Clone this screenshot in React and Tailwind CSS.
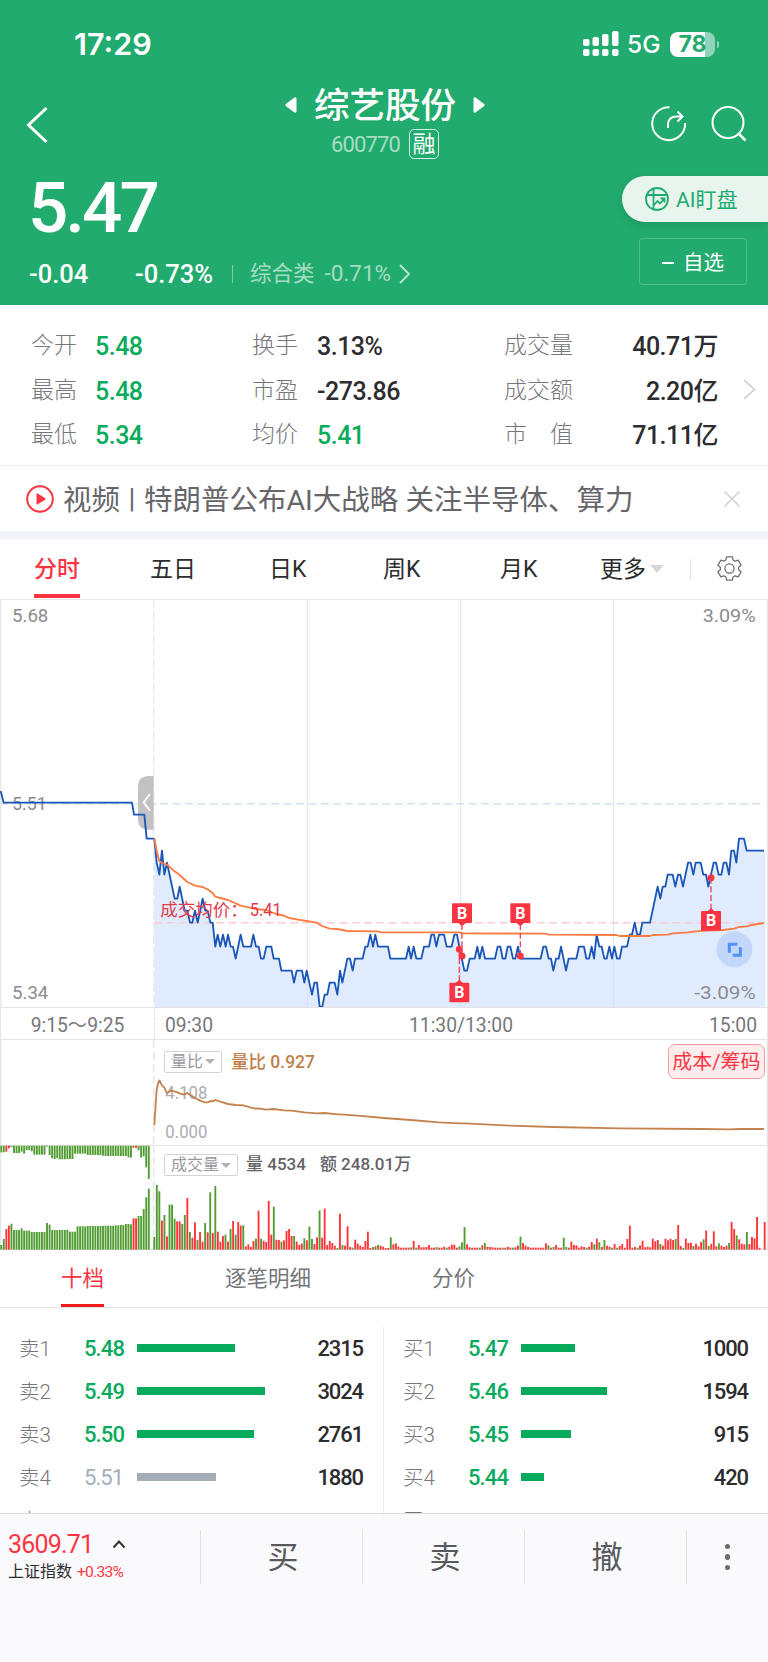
import React from 'react';
import clsx from 'clsx';

const STATS = [
  [['今开', '5.48', true], ['换手', '3.13%'], ['成交量', '40.71万']],
  [['最高', '5.48', true], ['市盈', '-273.86'], ['成交额', '2.20亿']],
  [['最低', '5.34', true], ['均价', '5.41', true], ['市　值', '71.11亿']],
];

const SELL_ORDERS = [
  { label: '卖1', price: '5.48', qty: 2315, bar: 98 },
  { label: '卖2', price: '5.49', qty: 3024, bar: 128 },
  { label: '卖3', price: '5.50', qty: 2761, bar: 117 },
  { label: '卖4', price: '5.51', qty: 1880, bar: 79, flat: true },
  { label: '卖5' },
];

const BUY_ORDERS = [
  { label: '买1', price: '5.47', qty: 1000, bar: 54 },
  { label: '买2', price: '5.46', qty: 1594, bar: 86 },
  { label: '买3', price: '5.45', qty: 915, bar: 50 },
  { label: '买4', price: '5.44', qty: 420, bar: 23 },
  { label: '买5' },
];

// [x, cents above 5.34]
const PRICE = [
  [463, 14], [470, 12], [478, 11], [486, 13], [493, 11], [501, 12], [524, 9], [532, 9], [539, 10], [554, 8],
  [562, 8], [570, 7], [577, 7], [585, 8], [593, 7], [608, 9], [616, 8], [623, 8], [631, 7], [638, 7],
  [646, 5], [653, 6], [661, 5], [669, 6], [677, 5], [684, 6], [692, 5], [699, 5], [707, 4], [722, 6],
  [730, 5], [753, 5], [760, 6], [768, 5], [776, 5], [783, 4], [791, 4], [799, 5], [814, 5], [821, 4],
  [837, 4], [844, 3], [875, 3], [882, 2], [890, 3], [906, 3], [913, 2], [920, 3], [936, 1], [943, 2],
  [951, 2], [959, 0], [967, 0], [974, 1], [982, 1], [989, 2], [1004, 2], [1012, 1], [1020, 3], [1027, 2],
  [1042, 4], [1050, 4], [1058, 3], [1065, 4], [1088, 4], [1096, 5], [1103, 5], [1111, 6], [1119, 5], [1126, 6],
  [1134, 5], [1164, 5], [1171, 4], [1218, 4], [1226, 5], [1233, 4], [1241, 5], [1249, 4], [1264, 4], [1272, 5],
  [1287, 5], [1294, 6], [1302, 6], [1309, 5], [1317, 6], [1332, 6], [1340, 5], [1355, 5], [1363, 6], [1371, 6],
  [1378, 5], [1393, 3], [1401, 3], [1409, 4], [1424, 4], [1432, 5], [1439, 4], [1447, 5], [1455, 4], [1485, 4],
  [1493, 5], [1501, 5], [1508, 4], [1516, 4], [1523, 5], [1531, 5], [1539, 4], [1546, 4], [1554, 5], [1561, 4],
  [1622, 4], [1630, 5], [1638, 5], [1646, 4], [1653, 4], [1660, 3], [1668, 4], [1676, 4], [1683, 5], [1698, 3],
  [1706, 4], [1729, 4], [1737, 5], [1752, 5], [1759, 4], [1767, 4], [1775, 5], [1782, 4], [1790, 6], [1798, 5],
  [1805, 5], [1813, 4], [1820, 4], [1828, 5], [1836, 4], [1843, 5], [1851, 4], [1859, 4], [1866, 5], [1881, 5],
  [1889, 6], [1896, 6], [1904, 7], [1912, 6], [1920, 6], [1927, 7], [1950, 7], [1973, 10], [1981, 9], [1988, 10],
  [1996, 10], [2003, 11], [2018, 11], [2026, 10], [2034, 11], [2041, 11], [2049, 10], [2064, 12], [2072, 12],
  [2080, 11], [2087, 12], [2102, 12], [2110, 11], [2118, 11], [2125, 10], [2133, 11], [2141, 12], [2148, 12],
  [2156, 11], [2164, 11], [2171, 12], [2179, 12], [2187, 11], [2194, 13], [2202, 13], [2209, 12], [2217, 14],
  [2232, 14], [2240, 13], [2292, 13],
];

const AVERAGE =
  '463,746 470,782 478,814 486,819 501,824 524,844 539,855 562,876 585,887 608,891 623,898 638,909 646,920 661,924 684,930 722,947 745,952 768,957 798,960 829,972 852,977 867,984 890,988 920,993 950,998 966,1008 989,1016 1012,1017 1042,1023 1134,1024 1145,1027 1379,1027 1386,1030 1638,1031 1645,1034 1850,1035 1858,1038 1950,1038 1958,1035 2003,1034 2018,1030 2064,1027 2087,1024 2118,1022 2170,1020 2202,1016 2217,1011 2240,1009 2255,1005 2292,999';

const RATIO =
  '463,285 467,225 470,180 474,160 478,151 486,166 493,173 501,190 508,184 516,182 532,187 547,193 554,193 562,189 570,194 585,204 600,212 615,217 623,217 631,213 638,214 646,210 661,215 684,222 707,225 730,226 753,233 768,236 776,235 798,239 821,237 852,241 875,242 913,247 951,250 974,249 1012,253 1020,253 1073,257 1152,264 1233,270 1316,277 1380,280 1395,280 1530,287 1660,291 1860,295 2100,297 2190,298 2220,297 2292,297';

// minute volume, split into runs by starting minute; trailing g = falling minute
const VOLUME = [
  [0, '38g 194g 175g 87 104g 40 135g 135g 93g 85 85 77g 104g 155 53g 36 82 29g 53 24 80g 52 172g 50 191g 54 24 41 45g 24 62g 86 45g 83 72 73g'],
  [36, '10 16 8 26 33g 117 33g 27 23 146 45 129g 30 29 24g 28 56 62 41 41g 24 14 18 34g 28 69g 32g 17 37 118g 36 123'],
  [68, '14 26 20 12 5g 108 14g 12 70 8 6g 30 18 12 8 26 54 5 8g 10 14g 12 9 5 5'],
  [93, '37g 16 19 9 6 6 6 6 7g 26 6g 14 7 7 8 14 6 6 8g 6 6 9 6g 9 15 15 6 10g 22g 68g 16'],
  [124, '7 6 6 6 6g 13 20g 9 8 7 6 6 6 6g 6 9 6 6g 7 12 39g 20 12 8 6 6 6 6 6 6 19 13g 6 8g 14 6 6 36g 8g 6'],
  [164, '24 14 13 6 10 8 6g 9 23 16g 33 22g 8 29g 12 9 6g 17 6g 11 17 6 32 72 6 8 6g 13 27 7 9 7'],
  [196, '33 25 29 17g 12 33 28 33 29 32g 74 11 5g 33 20 21 11g 18 10 23 31g 57 11g 17 55 10 19g 12 8 12 20g'],
  [227, '83 62 43g 31 18 16 53g 17 38 34 98 6 0 83'],
];

const AUCTION_TOP =
  '20g 20g 18 8 4g 22g 22g 22g 18g 24g 13g 13g 17g 27g 27g 27g 27g 27g 3g 28g 38g 40g 38g 41g 41g 41g 40g 40g 40g 24g 24g 24g 24g 24g 28g 28g 28g 28g 28g 28g 30g 31g 31g 31g 31g 31g 31g 31g 31g 31g 35g 36g 6 7 14g 36g 32g 65g 100g';
const AUCTION_BOTTOM =
  '14g 32g 62 72 78g 59g 59g 59g 64g 57g 57g 57g 53g 53g 53g 53g 53g 53g 80g 75g 59g 59g 59g 59g 59g 59g 59g 54g 54g 54g 70g 70g 70g 70g 71g 71g 71g 71g 71g 71g 71g 72g 72g 72g 72g 73g 73g 74g 74g 77g 77g 76g 94 94 101g 101g 122g 157g 183g';

const STEP = 7.63;

const TRADES = [
  { x: 1378, dotY: 1078, boxY: 1178, below: true },
  { x: 1386, dotY: 1098, boxY: 940 },
  { x: 1561, dotY: 1098, boxY: 940 },
  { x: 2133, dotY: 863, boxY: 963, below: true },
];

const parseBars = (text) =>
  text.split(' ').map((v) => ({ h: parseInt(v, 10), down: v.endsWith('g') }));

const Bars = ({ values, x, y, hanging }) =>
  parseBars(values).map((bar, i) => (
    <rect
      key={i}
      x={x + i * STEP - 3}
      y={hanging ? y : y - bar.h}
      width="5.6"
      height={bar.h}
      fill={bar.down ? '#519c33' : '#ff3338'}
    />
  ));

const StatusBar = () => (
  <div className="flex items-center h-[88px] pl-[74px] pr-[49px] text-white font-['Inter']">
    <span className="text-[30.500px] leading-[40px] font-semibold">17:29</span>
    <div className="ml-auto flex items-center">
      <svg width="36" height="26" viewBox="0 0 36 26" fill="currentColor">
        <rect x="0" y="8" width="6.500" height="7" rx="2" />
        <rect x="9.500" y="6" width="6.500" height="9" rx="2" />
        <rect x="19" y="3" width="6.500" height="12" rx="2" />
        <rect x="29" y="0" width="6.500" height="15" rx="2" />
        <rect x="0" y="18" width="6.500" height="7" rx="2" />
        <rect x="9.500" y="18" width="6.500" height="7" rx="2" />
        <rect x="19" y="18" width="6.500" height="7" rx="2" />
        <rect x="29" y="18" width="6.500" height="7" rx="2" />
      </svg>
      <span className="ml-[8px] w-[43px] text-[24.500px] leading-[32px] font-medium">5G</span>
      <div className="flex items-center gap-[2px]">
        <div className="flex items-center justify-center w-[45px] h-[25px] rounded-[8px] bg-[linear-gradient(90deg,#fff_78%,#90d5b7_78%)] text-[#22ab6e] text-[23px] leading-[32px] font-bold">
          78
        </div>
        <div className="w-[2px] h-[7px] rounded-r bg-[#90d5b7]" />
      </div>
    </div>
  </div>
);

const TitleBar = () => (
  <div className="grid grid-cols-[1fr_auto_1fr] h-[82px] pl-[27px] pr-[25px] text-white">
    <svg className="mt-[18px] -ml-px" width="22" height="38" viewBox="0 0 22 38" fill="none" stroke="currentColor" strokeWidth="3">
      <path d="M20.500 2 2.500 19l18 17" />
    </svg>
    <div className="flex flex-col items-center">
      <div className="flex items-center gap-[17px] h-[34px]">
        <svg width="12" height="16" viewBox="0 0 12 16" fill="currentColor">
          <path d="M9.500.6Q11.500-.4 11.500 2v12q0 2.400-2 1.400L.8 9q-1-1 0-2Z" />
        </svg>
        <span className="pt-[2px] text-[35.500px] leading-[50px] font-medium">综艺股份</span>
        <svg width="12" height="16" viewBox="0 0 12 16" fill="currentColor">
          <path d="M2.500.6Q.5-.4.5 2v12q0 2.400 2 1.400L11.200 9q1-1 0-2Z" />
        </svg>
      </div>
      <div className="flex items-center gap-[9px] mt-[7px]">
        <span className="pt-[2px] text-[22px] leading-[26px] text-white/60 tracking-[-0.9px]">600770</span>
        <span className="flex items-center justify-center size-[30px] border-[1.5px] border-white/80 rounded-[5px] text-[23px] leading-none">
          融
        </span>
      </div>
    </div>
    <div className="flex justify-end gap-[24px] pt-[18px] -mr-[4px]">
      <svg width="36" height="36" viewBox="0 0 36 36" fill="none" stroke="currentColor" strokeWidth="2">
        <path d="M18.500 1.200A16.500 16.500 0 1 0 34.200 17" />
        <path d="M17 22v-3q0-8.500 8.500-8.500H30" />
        <path d="m26.500 5.500 5 5-5 5" />
      </svg>
      <svg width="36" height="36" viewBox="0 0 36 36" fill="none" stroke="currentColor" strokeWidth="2">
        <circle cx="17" cy="16.500" r="15.500" />
        <path d="m27.500 27.500 7 7" strokeWidth="2.500" />
      </svg>
    </div>
  </div>
);

const QuoteHeader = () => (
  <header className="h-[305px] bg-[#22ab6e]">
    <StatusBar />
    <TitleBar />
    <div className="flex justify-between text-white">
      <div className="pl-[29px]">
        <div className="h-[73px] -ml-[1px] pt-[2px] text-[71px] leading-[72px] font-medium tracking-[-3px]">5.47</div>
        <div className="flex items-center h-[30px] mt-[16px] text-[25.500px] font-medium">
          <span className="w-[106px]">-0.04</span>
          <span className="w-[97px]">-0.73%</span>
          <span className="w-px h-[18px] bg-white/40" />
          <span className="ml-[17px] text-[21.500px] text-white/60 font-normal">综合类</span>
          <span className="ml-[10px] text-[22.500px] text-white/60 font-normal">-0.71%</span>
          <svg className="ml-[8px]" width="12" height="20" viewBox="0 0 12 20" fill="none" stroke="#fff" strokeOpacity=".7" strokeWidth="1.800">
            <path d="m1 1 9 9-9 9" />
          </svg>
        </div>
      </div>
      <div className="flex flex-col items-end pt-[6px]">
        <div className="flex items-center w-[146px] h-[46px] pl-[23px] rounded-l-full bg-[#e8f4ee] text-[#22ab6e] shadow-[0_3px_8px_rgba(0,0,0,0.12)]">
          <svg width="24" height="24" viewBox="0 0 24 24" fill="none" stroke="currentColor" strokeWidth="1.800">
            <circle cx="12" cy="12" r="11" />
            <path d="M8.500 1.800v20.400M1.500 8h21M9 18l3.500-4 2.500 2.500 4.500-5M15.500 11.500h4v4" />
          </svg>
          <span className="ml-[7px] pt-[2px] text-[21px] leading-[28px]">AI盯盘</span>
        </div>
        <div className="flex items-center justify-center w-[108px] h-[47px] mt-[16px] mr-[21px] pt-[3px] border border-white/20 rounded-[3px] text-[20.500px]">
          <span className="w-[12px] h-[2px] mr-[9px] bg-white" />
          自选
        </div>
      </div>
    </div>
  </header>
);

const Stats = () => (
  <section className="relative h-[160px] pt-[18px] pl-[31px] pr-[50px]">
    {STATS.map((row, i) => (
      <div key={i} className="grid grid-cols-[64px_157px_65px_187px_76px_1fr] items-center h-[44.700px]">
        {row.map(([label, value, down], j) => (
          <React.Fragment key={label}>
            <span className="pt-px text-[23px] leading-[32px] whitespace-nowrap text-[#77777b] font-light">{label}</span>
            <span
              className={clsx(
                'text-[25px] leading-[32px] tracking-[-0.5px] font-medium pt-[3px]',
                down ? 'text-[#08ab5c]' : 'text-[#2d2d2f]',
                j === 2 && 'text-right'
              )}
            >
              {value}
            </span>
          </React.Fragment>
        ))}
      </div>
    ))}
    <svg className="absolute right-[12px] top-[74px]" width="13" height="21" viewBox="0 0 13 21" fill="none" stroke="#c9c9cf" strokeWidth="1.500">
      <path d="m1 1 10.500 9.500L1 20" />
    </svg>
  </section>
);

const NewsBar = () => (
  <section className="flex items-center h-[66px] pl-[26px] pr-[28px] border-t border-[#eeeff6]">
    <svg width="28" height="28" viewBox="0 0 28 28">
      <circle cx="14" cy="14" r="12.800" fill="none" stroke="#fa3543" strokeWidth="2" />
      <path d="M10.500 9.200q0-1.300 1.200-.6l7.500 4.600q.9.800 0 1.500l-7.500 4.600q-1.200.5-1.200-.6Z" fill="#fa3543" />
    </svg>
    <span className="ml-[9px] pt-[4px] text-[28.500px] leading-[40px] whitespace-nowrap text-[#66666a]">
      视频<span className="inline-block w-[24px] text-center text-[28px] leading-none align-[2px]">|</span>特朗普公布AI大战略 关注半导体、算力
    </span>
    <svg className="ml-auto" width="16" height="16" viewBox="0 0 16 16" stroke="#c9c9cf" strokeWidth="1.300">
      <path d="m.5.5 15 15M15.500.5l-15 15" />
    </svg>
  </section>
);

const PeriodTabs = () => (
  <nav className="flex h-[60px] pl-[34px] pr-[26px] border-t-[8px] border-[#f2f3f9] box-content text-[23px] leading-[61px] text-[#2d2d2f]">
    <div className="w-[116px]">
      <span className="inline-block h-[59px] border-b-4 border-[#fa3543] text-[#fa3543] font-medium">分时</span>
    </div>
    <div className="w-[119px]">五日</div>
    <div className="w-[114px]">日K</div>
    <div className="w-[117px]">周K</div>
    <div className="w-[100px]">月K</div>
    <div className="flex items-center w-[90px]">
      更多
      <span className="ml-[4px] border-x-[7px] border-x-transparent border-t-[8px] border-t-[#d6d7dd]" />
    </div>
    <div className="w-px h-[21px] mt-[20px] bg-[#e3e3e7]" />
    <svg
      className="ml-auto mt-[17px]"
      width="25"
      height="25"
      viewBox="0 0 24 24"
      fill="none"
      stroke="#6d6d72"
      strokeWidth="1.200"
      strokeLinejoin="round"
    >
      <path d="M8.600 3.800 9.200.8h5.600l.6 3 2 1.200 2.900-1 2.800 4.800-2.300 2v2.400l2.300 2-2.800 4.800-2.900-1-2 1.200-.6 3H9.200l-.6-3-2-1.200-2.900 1-2.800-4.800 2.300-2v-2.400l-2.300-2L3.700 4l2.900 1Z" />
      <circle cx="12" cy="12" r="4.400" />
    </svg>
  </nav>
);

const TradeMark = ({ x, dotY, boxY, below }) => (
  <g>
    <line x1={x} y1={dotY} x2={x} y2={below ? boxY : boxY + 60} stroke="#f0445a" strokeWidth="4" strokeDasharray="18 8" />
    <circle cx={x} cy={dotY} r="10.500" fill="#fa3543" />
    <path
      d={below ? `M${x - 12} ${boxY + 2}l12-11 12 11z` : `M${x - 12} ${boxY + 58}l12 11 12-11z`}
      fill="#fa3543"
    />
    <rect x={x - 30} y={boxY} width="60" height="59" rx="3" fill="#fa3543" />
    <text x={x} y={boxY + 46} textAnchor="middle" fontSize="48" fontWeight="700" fill="#fff">B</text>
  </g>
);

const PriceChart = () => {
  const points = PRICE.map(([x, cents]) => `${x},${1250 - cents * 36}`).join(' ');
  return (
    <svg className="block" width="768" height="408" viewBox="0 27 2304 1224">
      <g stroke="#e6e6e8" strokeWidth="3.500" fill="none">
        <path d="M0 28H2304M2 27V1251M2302 27V1251" />
        <path d="M922 27V1251M1382 27V1251M1841 27V1251" />
        <path d="M461 27V1251" strokeDasharray="24 12" />
      </g>
      <path d="M0 641H2292" stroke="#d4e0ea" strokeWidth="4.500" strokeDasharray="24 13" />
      <polygon points={`463,1251 ${points} 2296,782 2296,1251`} fill="#cddffb" fillOpacity=".62" />
      <path d="M463 998H2292" stroke="#f9cdd2" strokeWidth="4.500" strokeDasharray="24 13" />
      <g fontSize="56" fill="#8c8c90">
        <text x="36" y="97" textLength="109" lengthAdjust="spacingAndGlyphs">5.68</text>
        <text x="36" y="661" textLength="104" lengthAdjust="spacingAndGlyphs">5.51</text>
        <text x="36" y="1227" textLength="109" lengthAdjust="spacingAndGlyphs">5.34</text>
        <text x="2108" y="97" textLength="159" lengthAdjust="spacingAndGlyphs">3.09%</text>
        <text x="2083" y="1227" textLength="184" lengthAdjust="spacingAndGlyphs">-3.09%</text>
      </g>
      <g fill="none" strokeWidth="5.500" strokeLinejoin="round">
        <path d="M461 558h-14q-33 0-33 33v95q0 33 33 33h14z" fill="#c2c2c4" />
        <path d="m450 612-19 25 19 25" stroke="#fff" />
        <polyline points="2,603 11,638 396,638 402,674 433,674 440,746 463,746" stroke="#1a55b8" />
        <polyline points={points} stroke="#1a55b8" />
        <polyline points={AVERAGE} stroke="#fb7c42" />
      </g>
      <g fontSize="52.500" fill="#e23c4c">
        <text x="481" y="978">成交均价：</text>
        <text x="749" y="977" fontSize="54" textLength="96" lengthAdjust="spacingAndGlyphs">5.41</text>
      </g>
      {TRADES.map((trade) => (
        <TradeMark key={trade.x} {...trade} />
      ))}
      <circle cx="2203" cy="1078" r="54" fill="#c3d7fb" />
      <path d="M2188 1088v-25h24M2198 1096h23v-24" fill="none" stroke="#5091f8" strokeWidth="9" />
    </svg>
  );
};

const TimeAxis = () => (
  <div className="grid grid-cols-[153px_153px_308px_154px] h-[33px] border border-[#e4e4e6] text-[19.300px] leading-[35px] text-[#77777b]">
    <span className="text-center">9:15～9:25</span>
    <span className="h-[31px] pl-[10px] border-l border-dashed border-[#dedee0]">09:30</span>
    <span className="text-center">11:30/13:00</span>
    <span className="text-right pr-[12px]">15:00</span>
  </div>
);

const IndicatorSelect = ({ children }) => (
  <div className="flex items-center h-[22px] px-[6px] border border-[#d3d3d5] rounded-[2px] bg-white/60 text-[16px] leading-none text-[#9a9a9e] font-normal">
    {children}
    <span className="ml-[2px] border-x-[5px] border-x-transparent border-t-[5px] border-t-[#b0b0b4]" />
  </div>
);

const RatioPanel = () => (
  <section className="relative h-[105px]">
    <svg className="block" width="768" height="105" viewBox="0 30 2304 315">
      <path d="M2 30V345M2302 30V345" stroke="#e4e4e6" strokeWidth="4" />
      <path d="M461 30V345" stroke="#e4e4e6" strokeWidth="4" strokeDasharray="24 12" />
      <g fontSize="56" fill="#acacb0">
        <text x="496" y="207" textLength="126" lengthAdjust="spacingAndGlyphs">4.108</text>
        <text x="496" y="325" textLength="126" lengthAdjust="spacingAndGlyphs">0.000</text>
      </g>
      <polyline points={RATIO} fill="none" stroke="#c38350" strokeWidth="5.500" strokeLinejoin="round" />
    </svg>
    <div className="absolute top-[9px] left-[164px] flex items-center">
      <IndicatorSelect>量比</IndicatorSelect>
      <span className="ml-[9px] pt-[1px] text-[17.500px] leading-[24px] text-[#bf804c] font-medium">量比 0.927</span>
    </div>
    <div className="absolute top-[4px] right-[3px] flex items-center justify-center w-[97px] h-[35px] border-[1.500px] border-[#fb9ba1] rounded-[7px] bg-[#ffedee] text-[20px] leading-none text-[#fa3543]">
      成本/筹码
    </div>
  </section>
);

const VolumePanel = () => (
  <section className="relative h-[105px]">
    <svg className="block" width="768" height="105" viewBox="0 345 2304 315">
      <path d="M0 346.500H2304M2 345V660M2302 345V660M0 659H2304" stroke="#e4e4e6" strokeWidth="3.500" />
      <path d="M461 345V660" stroke="#e4e4e6" strokeWidth="4" strokeDasharray="24 12" />
      <Bars values={AUCTION_TOP} x={4} y={347} hanging />
      <Bars values={AUCTION_BOTTOM} x={4} y={659} />
      {VOLUME.map(([start, values]) => (
        <Bars key={start} values={values} x={463 + start * STEP} y={659} />
      ))}
    </svg>
    <div className="absolute top-[9px] left-[164px] flex items-center text-[17px] leading-[22px] text-[#636367] font-medium">
      <IndicatorSelect>成交量</IndicatorSelect>
      <span className="ml-[8px] -mt-[2px]">量 4534</span>
      <span className="ml-[14px] -mt-[2px]">额 248.01万</span>
    </div>
  </section>
);

const DetailTabs = () => (
  <nav className="flex h-[58px] pl-[61px] border-b border-[#e6e6e8] text-[21.500px] leading-[58px] text-[#75757a]">
    <div className="w-[164px]">
      <span className="inline-block h-[57px] border-b-[3px] border-[#f01818] text-[#fa3543]">十档</span>
    </div>
    <div className="w-[207px]">逐笔明细</div>
    <div>分价</div>
  </nav>
);

const OrderColumn = ({ orders }) => (
  <div className="w-[384px] pl-[19px] pr-[20px] first:border-r border-[#ededef]">
    {orders.map((order) => (
      <div key={order.label} className="flex items-center h-[43px] text-[22px] leading-[30px]">
        <span className="w-[65px] text-[20.500px] text-[#77777b] font-light">{order.label}</span>
        {order.price && (
          <>
            <span
              className={clsx(
                'w-[53px] tracking-[-0.9px] pt-px',
                order.flat ? 'text-[#a5adb8]' : 'text-[#08ab5c] font-medium'
              )}
            >
              {order.price}
            </span>
            <span
              className={clsx('h-[8px] mb-[2px]', order.flat ? 'bg-[#a5adb8]' : 'bg-[#08ab5c]')}
              style={{ width: order.bar }}
            />
            <span className="ml-auto tracking-[-1.1px] text-[#2d2d2f] font-medium pt-px">{order.qty}</span>
          </>
        )}
      </div>
    ))}
  </div>
);

const OrderBook = () => (
  <section className="flex h-[205px] pt-[19px] overflow-hidden">
    <OrderColumn orders={SELL_ORDERS} />
    <OrderColumn orders={BUY_ORDERS} />
  </section>
);

const BottomBar = () => (
  <footer className="flex h-[149px] pt-[16px] border-t border-[#dcdce0] bg-[#fafafc]">
    <div className="w-[200px] pl-[8px] pt-px">
      <div className="flex items-center h-[28px] text-[25px] leading-[28px] text-[#fa3543] tracking-[-0.8px]">
        3609.71
        <svg className="ml-[19px] mb-[2px]" width="14" height="9" viewBox="0 0 14 9" fill="none" stroke="#333" strokeWidth="2">
          <path d="m1.500 7.500 5.500-6 5.500 6" />
        </svg>
      </div>
      <div className="flex items-center mt-[2px] text-[16px] leading-[22px] text-[#2d2d2f]">
        上证指数
        <span className="ml-[5px] text-[15.500px] text-[#fa3543] tracking-[-0.7px]">+0.33%</span>
      </div>
    </div>
    {['买', '卖', '撤'].map((action) => (
      <button
        key={action}
        className="flex items-center justify-center w-[162px] h-[54px] pl-[3px] pt-px border-l border-[#e2e2e6] text-[31px] leading-[44px] text-[#5a5a5e]"
      >
        {action}
      </button>
    ))}
    <div className="flex flex-col items-center justify-center gap-[5px] flex-1 h-[54px] border-l border-[#e2e2e6]">
      <span className="size-[5.500px] rounded-full bg-[#6b6b70]" />
      <span className="size-[5.500px] rounded-full bg-[#6b6b70]" />
      <span className="size-[5.500px] rounded-full bg-[#6b6b70]" />
    </div>
  </footer>
);

export default function App() {
  return (
    <div className="w-[768px] h-[1662px] overflow-hidden bg-white font-['Roboto','Noto_Sans_CJK_SC',sans-serif]">
      <QuoteHeader />
      <Stats />
      <NewsBar />
      <PeriodTabs />
      <PriceChart />
      <TimeAxis />
      <RatioPanel />
      <VolumePanel />
      <DetailTabs />
      <OrderBook />
      <BottomBar />
    </div>
  );
}
